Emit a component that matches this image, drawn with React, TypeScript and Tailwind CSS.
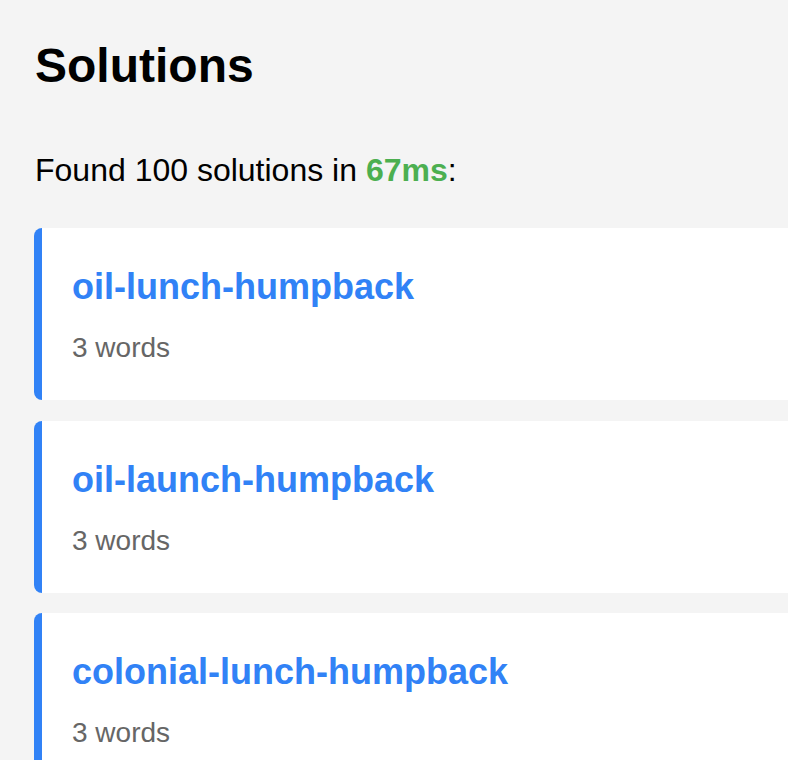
const solutions = [
  "oil-lunch-humpback",
  "oil-launch-humpback",
  "colonial-lunch-humpback",
]

export default function App() {
  const total = 100
  const elapsed = 67

  return (
    <main
      className="min-h-screen overflow-hidden bg-[#f4f4f4] pl-[34px] pt-[38px] text-black"
      style={{ fontFamily: '"Liberation Sans", Arial, sans-serif' }}
    >
      {/* heading */}
      <h1 className="pl-px text-[48px] font-bold leading-[56px]">Solutions</h1>

      <p className="mt-[56px] pl-px text-[32px] leading-[40px]">
        Found {total} solutions in{" "}
        <span className="font-bold text-[#4caf50]">{elapsed}ms</span>:
      </p>

      {/* result cards */}
      <div className="mr-[-40px] mt-[38px] flex flex-col gap-[20.5px]">
        {solutions.map((s) => (
          <div
            key={s}
            className="rounded-[8px] border-l-[8px] border-[#3182f6] bg-white pb-[36px] pl-[30px] pt-[37px]"
          >
            <h3 className="text-[36px] font-bold leading-[44px] text-[#3182f6]">{s}</h3>
            <div className="mt-[23px] text-[28px] leading-[32px] text-[#666666]">
              {s.split("-").length} words
            </div>
          </div>
        ))}
      </div>
    </main>
  )
}
